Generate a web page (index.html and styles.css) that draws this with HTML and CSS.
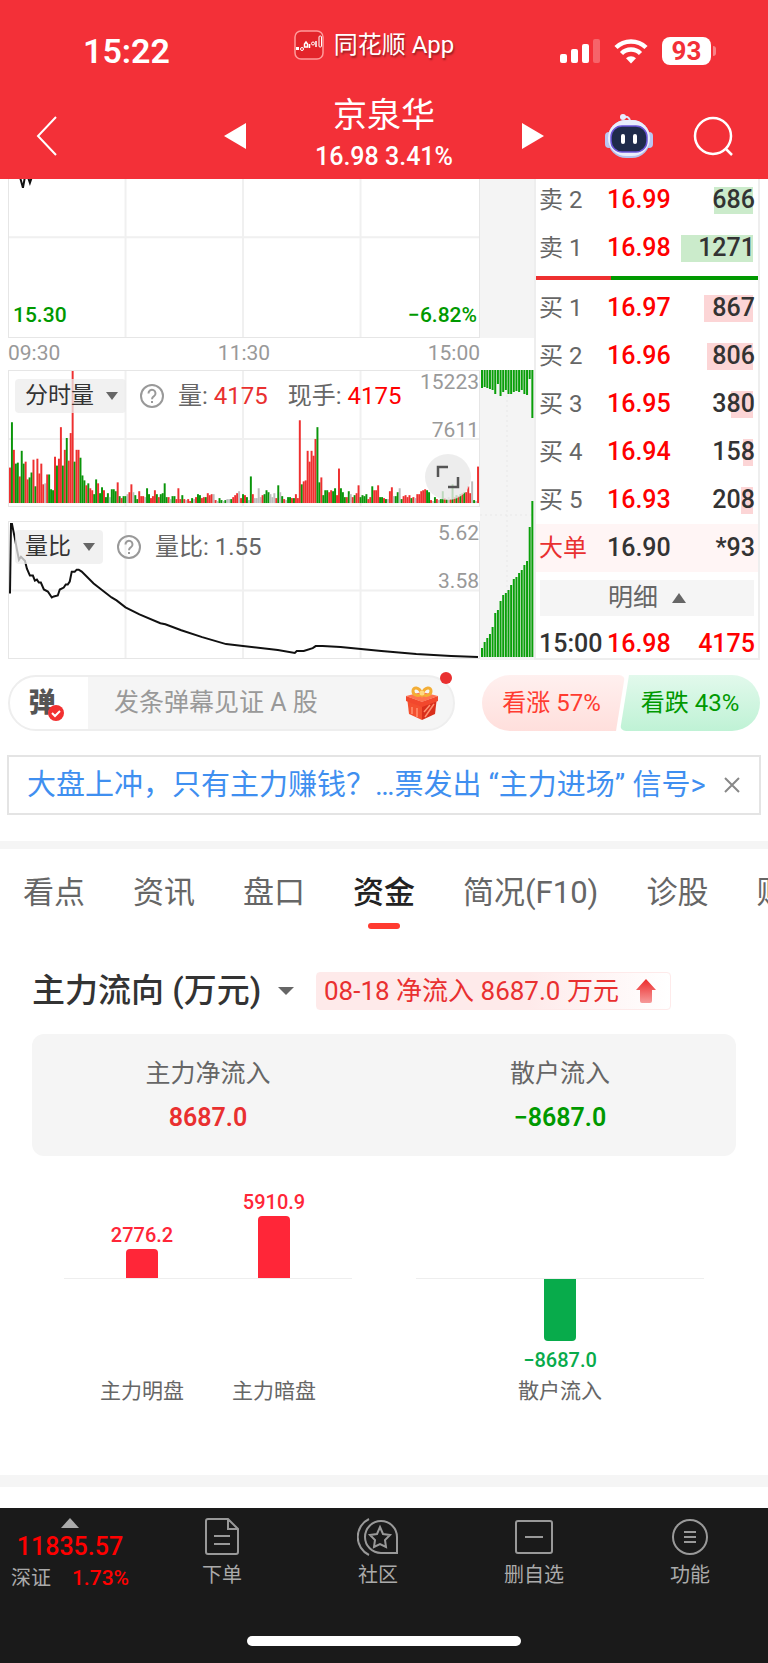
FILE: index.html
```html
<!DOCTYPE html>
<html lang="zh-CN">
<head>
    <meta charset="UTF-8">
    <meta name="viewport" content="width=device-width, initial-scale=1">
    <title>京泉华</title>
    <link rel="stylesheet" href="styles.css">
</head>
<body>
    <header class="header">
        <div class="status">
            <div class="clock">15:22</div>
            <div class="app">
                <svg class="app-logo" width="30" height="30" viewBox="0 0 30 30" fill="none" stroke="#fff">
                    <rect x="1" y="1" width="28" height="28" rx="6" fill="#e3242a" stroke="#ff9a9a" stroke-width="1.5"/>
                    <path d="M2 18.500h3" stroke-width="3"/>
                    <circle cx="8" cy="19" r="1.500"/>
                    <path d="M12 12l1.500 2v3h-3v-3zM15.500 14v4M22 11v6" stroke-width="1.500"/>
                    <circle cx="19" cy="13.500" r="1.500"/>
                    <rect x="25" y="6" width="2.500" height="11" rx="1"/>
                </svg>
                <span>同花顺 App</span>
            </div>
            <div class="signals">
                <svg width="40" height="26" viewBox="0 0 40 26" fill="#fff">
                    <rect x="0" y="16" width="7" height="9" rx="2"/>
                    <rect x="11" y="11" width="7" height="14" rx="2"/>
                    <rect x="22" y="6" width="7" height="19" rx="2"/>
                    <rect x="33" y="1" width="7" height="24" rx="2" opacity=".25"/>
                </svg>
                <svg width="34" height="26" viewBox="0 0 34 26" fill="none" stroke="#fff" stroke-width="4.500">
                    <path d="M2 9.500a21.500 21.500 0 0 1 30 0"/>
                    <path d="M7.500 15.500a13.500 13.500 0 0 1 19 0"/>
                    <path d="M17 25.500l-5-5.200a7 7 0 0 1 10 0z" fill="#fff" stroke="none"/>
                </svg>
                <div class="battery">93</div>
            </div>
        </div>
        <nav class="nav">
            <button class="icon-btn back" aria-label="返回">
                <svg width="22" height="40" viewBox="0 0 22 40" fill="none" stroke="#fff" stroke-width="2"><path d="M20 1L2 20l18 19"/></svg>
            </button>
            <div class="stock">
                <button class="icon-btn" aria-label="上一只">
                    <svg width="22" height="26" viewBox="0 0 22 26" fill="#fff"><path d="M22 0v26L0 13z"/></svg>
                </button>
                <div class="stock-info">
                    <h1>京泉华</h1>
                    <p>16.98 3.41%</p>
                </div>
                <button class="icon-btn" aria-label="下一只">
                    <svg width="22" height="26" viewBox="0 0 22 26" fill="#fff"><path d="M0 0v26l22-13z"/></svg>
                </button>
            </div>
            <div class="nav-right">
                <button class="icon-btn" aria-label="智能助手">
                    <svg width="48" height="46" viewBox="0 0 48 46">
                        <path d="M19 4q6-1 6 5" fill="none" stroke="#dfe6fb" stroke-width="2"/>
                        <circle cx="18" cy="4" r="3" fill="#e8edff"/>
                        <rect x="0" y="19" width="8" height="16" rx="4" fill="#b9c6f2"/>
                        <rect x="40" y="19" width="8" height="16" rx="4" fill="#b9c6f2"/>
                        <rect x="3" y="7" width="42" height="38" rx="18" fill="#b4c3ee"/>
                        <rect x="3" y="7" width="42" height="36" rx="18" fill="#e9eefc"/>
                        <rect x="6" y="13" width="36" height="26" rx="11" fill="#1f2b4a" stroke="#6a56d8" stroke-width="1.500"/>
                        <rect x="16" y="21" width="4" height="10" rx="2" fill="#fff"/>
                        <rect x="28" y="21" width="4" height="10" rx="2" fill="#fff"/>
                    </svg>
                </button>
                <button class="icon-btn" aria-label="搜索">
                    <svg width="40" height="40" viewBox="0 0 40 40" fill="none" stroke="#fff" stroke-width="2.500"><circle cx="20" cy="20" r="18"/><path d="M33 33l6 6"/></svg>
                </button>
            </div>
        </nav>
    </header>

    <section class="market">
        <div class="charts">
            <div class="chart chart-price">
                <svg viewBox="0 0 472 162" preserveAspectRatio="none">
                    <path class="grid" d="M0 61h472M117 0v162M235 0v162M353 0v162"/>
                    <path class="line" d="M11 0l3 11l2-11l3 0l2 6l2-6"/>
                </svg>
                <span class="tick green low-left">15.30</span>
                <span class="tick green low-right">−6.82%</span>
            </div>
            <div class="times"><span>09:30</span><span>11:30</span><span>15:00</span></div>
            <div class="chart chart-volume">
                <svg id="volume" viewBox="0 0 472 137" preserveAspectRatio="none">
                    <path class="grid" d="M0 69h472M117 0v137M235 0v137M353 0v137"/>
                </svg>
                <div class="legend">
                    <div class="picker">
                        <select aria-label="指标一"><option>分时量</option></select>
                    </div>
                    <svg class="help" viewBox="0 0 24 24"><circle cx="12" cy="12" r="11"/><path d="M8.500 9.500a3.500 3.500 0 1 1 5.500 2.700q-2 1.300-2 3M12 17v2"/></svg>
                    <span>量: <b class="soft-red">4175</b></span>
                    <span class="legend-next">现手: <b class="red">4175</b></span>
                </div>
                <div class="scale"><span>15223</span><span>7611</span></div>
                <button class="expand" aria-label="全屏">
                    <svg width="24" height="24" viewBox="0 0 24 24" fill="none" stroke="#555" stroke-width="2.500"><path d="M2 12V2h10M22 12v10H12"/></svg>
                </button>
            </div>
            <div class="chart chart-ratio">
                <svg viewBox="0 0 472 137" preserveAspectRatio="none">
                    <path class="grid" d="M0 69h472M117 0v137M235 0v137M353 0v137"/>
                    <polyline class="line" points="1,72 2,2 3,2 6,17 8,28 10,38 12,35 16,39 18,47 21,54 24,54 26,59 28,58 30,61 32,61 35,68 39,70 43,76 45,75 49,74 51,68 55,66 57,63 59,63 61,60 63,50 66,50 68,48 70,48 73,50 85,62 103,76 108,79 117,86 131,93 152,102 157,103 173,109 194,116 218,123 235,125 270,129 287,132 289,130 296,130 305,127 308,125 315,125 333,126 374,130 409,133 444,135 471,136"/>
                </svg>
                <div class="legend">
                    <div class="picker">
                        <select aria-label="指标二"><option>量比</option></select>
                    </div>
                    <svg class="help" viewBox="0 0 24 24"><circle cx="12" cy="12" r="11"/><path d="M8.500 9.500a3.500 3.500 0 1 1 5.500 2.700q-2 1.300-2 3M12 17v2"/></svg>
                    <span>量比: 1.55</span>
                </div>
                <div class="scale"><span>5.62</span><span>3.58</span></div>
            </div>
        </div>

        <div class="auction">
            <div class="auction-top"></div>
            <svg id="auction" class="auction-bottom" viewBox="0 0 54 290" preserveAspectRatio="none">
                <path d="M27 0v290M0 145h54" stroke="#e8e8e8" stroke-dasharray="2 3"/>
            </svg>
        </div>

        <div class="book">
            <table>
                <tr><th>卖 2</th><td class="red">16.99</td><td class="qty"><i class="sell" style="width: 39px"></i><span>686</span></td></tr>
                <tr><th>卖 1</th><td class="red">16.98</td><td class="qty"><i class="sell" style="width: 72px"></i><span>1271</span></td></tr>
            </table>
            <div class="balance"><i style="width: 34%"></i></div>
            <table>
                <tr><th>买 1</th><td class="red">16.97</td><td class="qty"><i class="buy" style="width: 49px"></i><span>867</span></td></tr>
                <tr><th>买 2</th><td class="red">16.96</td><td class="qty"><i class="buy" style="width: 46px"></i><span>806</span></td></tr>
                <tr><th>买 3</th><td class="red">16.95</td><td class="qty"><i class="buy" style="width: 22px"></i><span>380</span></td></tr>
                <tr><th>买 4</th><td class="red">16.94</td><td class="qty"><i class="buy" style="width: 10px"></i><span>158</span></td></tr>
                <tr><th>买 5</th><td class="red">16.93</td><td class="qty"><i class="buy" style="width: 12px"></i><span>208</span></td></tr>
                <tr class="big"><th>大单</th><td>16.90</td><td class="qty"><span>*93</span></td></tr>
            </table>
            <button class="detail">明细 <i class="tri-up"></i></button>
            <table class="trades">
                <tr><th>15:00</th><td class="red">16.98</td><td class="qty red">4175</td></tr>
            </table>
        </div>
    </section>

    <section class="talk">
        <div class="danmaku">
            <button class="danmaku-toggle" aria-label="弹幕开关">
                弹
                <svg width="16" height="16" viewBox="0 0 16 16"><circle cx="8" cy="8" r="8" fill="#f23030"/><path d="M4 8l3 3 5-5" fill="none" stroke="#fff" stroke-width="2"/></svg>
            </button>
            <input type="text" aria-label="弹幕" placeholder="发条弹幕见证 A 股">
            <button class="icon-btn gift" aria-label="礼物">
                <svg width="34" height="36" viewBox="0 0 34 36">
                    <path d="M2 12l15 5v18L4 29z" fill="#f4502f"/>
                    <path d="M32 12l-15 5v18l13-6z" fill="#d92f1c"/>
                    <path d="M1 11l16-4 16 4-16 6z" fill="#ff7350"/>
                    <path d="M1 11l16 6 16-6v5l-16 6-16-6z" fill="#f2482d"/>
                    <path d="M7 22v7M12 23v9M20 32l9-13M19 27l6-7" stroke="#ff9070" stroke-width="1.500"/>
                    <path d="M17 9c-4 3-9 1-9-3s6-5 9 3c3-8 9-7 9-3s-5 6-9 3z" fill="none" stroke="#f3ad35" stroke-width="3"/>
                    <circle cx="17" cy="8" r="2.500" fill="#ffd980"/>
                </svg>
            </button>
            <i class="dot"></i>
        </div>
        <div class="vote">
            <button class="vote-up">看涨 57%</button>
            <button class="vote-down">看跌 43%</button>
        </div>
    </section>

    <div class="notice">
        <a href="#">大盘上冲，只有主力赚钱？…票发出 “主力进场” 信号&gt;</a>
        <button class="icon-btn" aria-label="关闭">
            <svg width="16" height="16" viewBox="0 0 16 16" stroke="#888" stroke-width="2"><path d="M1 1l14 14M15 1L1 15"/></svg>
        </button>
    </div>

    <nav class="tabs">
        <a href="#">看点</a>
        <a href="#">资讯</a>
        <a href="#">盘口</a>
        <a href="#" class="active">资金</a>
        <a href="#">简况(F10)</a>
        <a href="#">诊股</a>
        <a href="#">财务</a>
    </nav>

    <main class="funds">
        <div class="funds-head">
            <div class="picker picker-title">
                <select aria-label="资金流向"><option>主力流向 (万元)</option></select>
            </div>
            <div class="tag">
                08-18 净流入 8687.0 万元
                <svg width="20" height="24" viewBox="0 0 20 24">
                    <defs><linearGradient id="fade" x1="0" y1="0" x2="0" y2="1"><stop offset="0" stop-color="#ec2a2a"/><stop offset="1" stop-color="#f69a9a"/></linearGradient></defs>
                    <path d="M10 0l10 11h-4v11q0 2-2 2H6q-2 0-2-2V11H0z" fill="url(#fade)"/>
                </svg>
            </div>
        </div>
        <div class="summary">
            <div><p>主力净流入</p><strong class="soft-red">8687.0</strong></div>
            <div><p>散户流入</p><strong class="green">−8687.0</strong></div>
        </div>
        <div class="bars">
            <div class="bar-group">
                <div class="bar-col up">
                    <div class="above"><span>2776.2</span><i style="height: 29px"></i></div>
                    <div class="below"></div>
                    <p>主力明盘</p>
                </div>
                <div class="bar-col up">
                    <div class="above"><span>5910.9</span><i style="height: 62px"></i></div>
                    <div class="below"></div>
                    <p>主力暗盘</p>
                </div>
            </div>
            <div class="bar-group">
                <div class="bar-col down">
                    <div class="above"></div>
                    <div class="below"><i style="height: 62px"></i><span>−8687.0</span></div>
                    <p>散户流入</p>
                </div>
            </div>
        </div>
    </main>

    <footer class="footer">
        <div class="toolbar">
            <button class="index">
                <i class="tri-up"></i>
                <span class="index-value">11835.57</span>
                <span class="index-row"><span>深证</span><b>1.73%</b></span>
            </button>
            <button class="tool">
                <svg width="36" height="38" viewBox="0 0 36 38"><path d="M4 1h20l10 10v23q0 2-2 2H4q-2 0-2-2V3q0-2 2-2zM24 1v10h10M10 18h16M10 26h16"/></svg>
                下单
            </button>
            <button class="tool">
                <svg width="42" height="38" viewBox="0 0 42 38"><path d="M12 1a20 20 0 0 0 0 36M40 35H24A16 16 0 1 1 40 19zM23 9l3 7 7 1-5 5 1 7-6-3-6 3 1-7-5-5 7-1z"/></svg>
                社区
            </button>
            <button class="tool">
                <svg width="40" height="38" viewBox="0 0 40 38"><rect x="2" y="3" width="36" height="32" rx="2"/><path d="M11 19h18"/></svg>
                删自选
            </button>
            <button class="tool">
                <svg width="38" height="38" viewBox="0 0 38 38"><circle cx="19" cy="19" r="17"/><path d="M13 14h12M13 19h12M13 24h12"/></svg>
                功能
            </button>
        </div>
        <div class="home-bar"></div>
    </footer>

    <script src="script.js"></script>
</body>
</html>
```

FILE: styles.css
```css
* {
    box-sizing: border-box;
}
body {
    margin: 0;
    background: #fff;
    color: #333;
    font-family: Roboto, "Noto Sans CJK SC", sans-serif;
    font-size: 24px;
    line-height: 28px;
    overflow-x: hidden;
}
h1, p {
    margin: 0;
    font-weight: 400;
}
button, input, select {
    font: inherit;
    color: inherit;
    border: none;
    background: none;
    padding: 0;
    margin: 0;
    border-radius: 0;
}
a {
    color: inherit;
    text-decoration: none;
}
svg {
    display: block;
}
i {
    display: block;
}
.red {
    color: #f00;
}
.soft-red {
    color: #e93030;
}
.green {
    color: #009900;
}

/* header */
.header {
    position: relative;
    z-index: 1;
    background: #f33038;
    color: #fff;
}
.status {
    display: grid;
    grid-template-columns: 1fr auto 1fr;
    align-items: center;
    height: 96px;
    padding-top: 6px;
}
.clock {
    padding-left: 83px;
    font-size: 34px;
    font-weight: 600;
}
.app {
    display: flex;
    align-items: center;
    gap: 10px;
    padding: 0 20px 12px 0;
    line-height: 30px;
    text-shadow: 1px 2px 2px rgba(0, 0, 0, 0.4);
}
.signals {
    display: flex;
    align-items: center;
    justify-content: flex-end;
    gap: 14px;
    padding-right: 57px;
}
.battery {
    position: relative;
    width: 49px;
    height: 28px;
    border-radius: 8px;
    background: #fff;
    color: #f33038;
    font-size: 26px;
    font-weight: 700;
    line-height: 29px;
    text-align: center;
}
.battery::after {
    content: "";
    position: absolute;
    left: 51px;
    top: 9px;
    width: 3px;
    height: 10px;
    border-radius: 0 3px 3px 0;
    background: rgba(255, 255, 255, 0.4);
}
.nav {
    display: grid;
    grid-template-columns: 1fr 320px 1fr;
    align-items: center;
    height: 83px;
}
.nav .icon-btn {
    padding-bottom: 4px;
}
.back {
    justify-self: start;
    padding-left: 36px;
}
.stock {
    display: flex;
    align-items: center;
    justify-content: space-between;
}
.stock-info {
    text-align: center;
}
.stock-info h1 {
    font-size: 34px;
    line-height: 38px;
}
.stock-info p {
    font-size: 25px;
    font-weight: 500;
    line-height: 45px;
}
.nav-right {
    display: flex;
    align-items: center;
    justify-content: flex-end;
    gap: 40px;
    padding-right: 35px;
}

/* charts */
.market {
    display: flex;
    margin-top: -3px;
    padding: 0 8px;
}
.charts {
    flex: 1;
}
.chart {
    position: relative;
    border: 1px solid #e6e6e6;
}
.chart > svg {
    width: 100%;
    height: 100%;
}
.chart-price {
    height: 162px;
}
.chart-volume {
    height: 137px;
}
.chart-ratio {
    height: 138px;
    margin-top: 14px;
}
.grid {
    stroke: #f0f0f0;
    stroke-width: 2;
    fill: none;
}
.line {
    stroke: #111;
    stroke-width: 2;
    fill: none;
}
.tick {
    position: absolute;
    bottom: 8px;
    font-size: 21px;
    font-weight: 500;
}
.low-left {
    left: 4px;
}
.low-right {
    right: 2px;
}
.times {
    display: flex;
    justify-content: space-between;
    height: 32px;
    color: #999;
    font-size: 21px;
    line-height: 31px;
}
.legend {
    position: absolute;
    top: 7px;
    left: 6px;
    display: flex;
    align-items: center;
    height: 36px;
    color: #666;
    white-space: nowrap;
}
.legend b {
    font-weight: 400;
}
.legend-next {
    margin-left: 20px;
}
.picker {
    position: relative;
    padding: 0 32px 0 10px;
    border-radius: 4px;
    background: rgba(236, 236, 236, 0.75);
    color: #333;
    font-size: 23px;
}
.picker::after {
    content: "";
    position: absolute;
    right: 8px;
    top: 50%;
    margin-top: -4px;
    border: 6px solid transparent;
    border-top: 8px solid #666;
    border-bottom: none;
}
.picker select {
    display: block;
    appearance: none;
    height: 34px;
    line-height: 34px;
}
.help {
    width: 24px;
    height: 24px;
    margin: 0 14px;
    fill: none;
    stroke: #999;
    stroke-width: 2;
}
.scale {
    position: absolute;
    top: -13px;
    right: 0;
    color: #999;
    font-size: 21px;
    line-height: 48px;
    text-align: right;
}
.scale span {
    display: block;
}
.expand {
    position: absolute;
    right: 8px;
    bottom: 6px;
    display: grid;
    place-items: center;
    width: 46px;
    height: 46px;
    border-radius: 50%;
    background: rgba(232, 232, 232, 0.8);
}
.auction {
    display: flex;
    flex-direction: column;
    justify-content: space-between;
    width: 54px;
}
.auction-top {
    height: 162px;
    background: #f4f4f4;
}
.auction-bottom {
    width: 100%;
    height: 290px;
    background: #f4f4f4;
}

/* order book */
.book {
    width: 226px;
    border: 2px solid #eee;
    border-top: none;
    font-size: 25px;
}
.book table {
    width: 100%;
    border-collapse: collapse;
    table-layout: fixed;
}
.book th, .book td {
    height: 48px;
    padding: 0;
    font-weight: 500;
    text-align: left;
    white-space: nowrap;
}
.book th {
    width: 71px;
    padding-left: 3px;
    color: #666;
    font-size: 24px;
    font-weight: 400;
}
.book .qty {
    position: relative;
    padding-right: 3px;
    text-align: right;
}
.qty i {
    position: absolute;
    top: 11px;
    right: 5px;
    height: 27px;
}
.qty span {
    position: relative;
}
.sell {
    background: #cbebcb;
}
.buy {
    background: #fcd5d6;
}
.balance {
    height: 4px;
    margin: 4px 0;
    background: #009900;
}
.balance i {
    height: 4px;
    background: #ee3030;
}
.big {
    background: #fff5f5;
}
.book .big th {
    color: #e93030;
}
.detail {
    display: flex;
    align-items: center;
    justify-content: center;
    gap: 14px;
    width: 214px;
    height: 36px;
    margin: 8px 4px 14px;
    background: #f5f5f5;
    color: #666;
}
.tri-up {
    border: 7px solid transparent;
    border-top: none;
    border-bottom: 10px solid #666;
}
.book .trades th, .book .trades td {
    height: 28px;
    font-size: 25px;
    font-weight: 500;
}
.book .trades th {
    color: #333;
}

/* danmaku and vote */
.talk {
    display: flex;
    gap: 27px;
    padding: 15px 8px 0;
}
.danmaku {
    position: relative;
    flex: 1;
    display: flex;
    align-items: center;
    min-width: 0;
    height: 56px;
    padding-right: 14px;
    border: 2px solid #eee;
    border-radius: 28px;
    background: linear-gradient(90deg, #fff 78px, #f5f5f5 78px);
}
.danmaku-toggle {
    position: relative;
    width: 78px;
    padding-right: 14px;
    color: #555;
    font-size: 27px;
    font-weight: 900;
    line-height: 40px;
}
.danmaku-toggle svg {
    position: absolute;
    left: 38px;
    bottom: 2px;
}
.danmaku input {
    flex: 1;
    min-width: 0;
    padding-left: 26px;
    font-size: 25px;
    line-height: 36px;
    outline: none;
}
.danmaku input::placeholder {
    color: #999;
    opacity: 1;
}
.dot {
    position: absolute;
    top: -5px;
    right: 1px;
    width: 12px;
    height: 12px;
    border-radius: 50%;
    background: #e93030;
}
.vote {
    flex: none;
    display: flex;
    width: 278px;
}
.vote button {
    flex: 1;
    height: 56px;
}
.vote .vote-up {
    flex: 0 0 143px;
    border-radius: 28px 6px 6px 28px;
    background: linear-gradient(#fff0ef, #ffdfdc);
    clip-path: polygon(0 0, 100% 0, 134px 100%, 0 100%);
    color: #ff3b30;
    padding-right: 4px;
}
.vote .vote-down {
    margin-left: -5px;
    border-radius: 6px 28px 28px 6px;
    background: linear-gradient(#e2f9ec, #bff2d5);
    clip-path: polygon(9px 0, 100% 0, 100% 100%, 0 100%);
    color: #009900;
}

/* notice */
.notice {
    display: flex;
    align-items: center;
    justify-content: space-between;
    height: 60px;
    margin: 24px 7px 26px;
    padding: 0 19px 0 18px;
    border: 2px solid #e4e4e4;
}
.notice a {
    color: #3f8ff0;
    font-size: 29px;
    white-space: nowrap;
}

/* tabs */
.tabs {
    display: flex;
    gap: 48px;
    height: 94px;
    padding-left: 23px;
    border-top: 8px solid #f5f5f5;
    overflow: hidden;
    color: #666;
    font-size: 31px;
    line-height: 88px;
    white-space: nowrap;
}
.tabs .active {
    position: relative;
    color: #222;
    font-weight: 500;
}
.active::after {
    content: "";
    position: absolute;
    left: 50%;
    top: 74px;
    width: 32px;
    height: 6px;
    margin-left: -16px;
    border-radius: 3px;
    background: #ff3b30;
}

/* funds */
.funds {
    padding: 36px 32px 71px;
    border-bottom: 12px solid #f5f5f5;
}
.funds-head {
    display: flex;
    align-items: center;
    gap: 22px;
}
.picker-title {
    padding: 0 32px 0 0;
    background: none;
    font-size: 33px;
    font-weight: 500;
}
.picker-title::after {
    right: 0;
    border-width: 8px 8px 0;
}
.picker-title select {
    height: 40px;
    line-height: 40px;
}
.tag {
    display: flex;
    align-items: center;
    gap: 17px;
    height: 38px;
    padding: 0 14px 0 7px;
    border: 1px solid #feeaea;
    border-radius: 4px;
    background: linear-gradient(90deg, #feeaea 60%, #fff);
    color: #e93030;
    font-size: 26px;
    white-space: nowrap;
}
.summary {
    display: grid;
    grid-template-columns: 1fr 1fr;
    height: 122px;
    margin-top: 23px;
    padding-top: 20px;
    border-radius: 12px;
    background: #f5f5f5;
    font-size: 25px;
    text-align: center;
}
.summary p {
    color: #666;
    line-height: 40px;
}
.summary strong {
    font-weight: 600;
    line-height: 48px;
}
.bars {
    display: grid;
    grid-template-columns: 1fr 1fr;
    gap: 64px;
    padding: 0 32px;
}
.bar-group {
    position: relative;
    display: flex;
    padding: 0 12px;
}
.bar-group::before {
    content: "";
    position: absolute;
    left: 0;
    right: 0;
    top: 122px;
    border-top: 1px solid #eee;
}
.bar-col {
    flex: 1;
    font-size: 21px;
    text-align: center;
}
.above, .below {
    display: flex;
    flex-direction: column;
    align-items: center;
    font-size: 20px;
    font-weight: 500;
}
.above {
    justify-content: flex-end;
    height: 122px;
}
.below {
    height: 100px;
    padding-top: 1px;
}
.bar-col i {
    width: 32px;
}
.up {
    color: #ff2638;
}
.up i {
    border-radius: 4px 4px 0 0;
    background: #ff2638;
}
.down {
    color: #08ab4b;
}
.down i {
    margin-bottom: 5px;
    border-radius: 0 0 4px 4px;
    background: #08ab4b;
}
.bar-col p {
    color: #666;
    line-height: 26px;
}

/* footer */
.footer {
    height: 155px;
    margin-top: 21px;
    background: #1a1a1a;
    color: #aaa;
    font-size: 20px;
}
.toolbar {
    display: flex;
    height: 128px;
}
.index {
    display: flex;
    flex-direction: column;
    align-items: center;
    width: 144px;
    padding: 10px 4px 0 0;
}
.index .tri-up {
    border-width: 0 9px 10px;
    border-bottom-color: #aaa;
}
.index-value {
    color: #f00;
    font-size: 25px;
    font-weight: 500;
    line-height: 38px;
}
.index-row {
    display: flex;
    gap: 21px;
    line-height: 24px;
}
.index-row b {
    color: #f00;
    font-size: 21px;
    font-weight: 500;
}
.tool {
    flex: 1;
    display: flex;
    flex-direction: column;
    align-items: center;
    gap: 4px;
    padding-top: 10px;
    line-height: 30px;
}
.tool svg {
    fill: none;
    stroke: #999;
    stroke-width: 2;
}
.home-bar {
    width: 274px;
    height: 10px;
    margin: 0 auto;
    border-radius: 5px;
    background: #fff;
}
```

FILE: script.js
```javascript
const NS = 'http://www.w3.org/2000/svg';
const COLORS = { r: '#ee3030', g: '#0a950a', x: '#bdbdbd' };

// one entry per minute: colour + bar height
const minutes = `r36 g82 r54 g40 g41 r27 g53 g40 r42 r24 g26 g31 r44 g17 r45 r30 r40 r19 x20 r29
g29 g14 g13 r47 g38 r45 r77 g38 r54 g66 r43 r71 r134 g42 r54 r54 g46 g28 g23 r18
g20 r15 r13 g9 g24 r20 g10 g16 r13 g6 g10 x6 g14 g14 g12 r21 g7 r5 g7 g7
x9 r11 r19 x11 g8 g4 r12 r7 r7 x6 g15 g9 r5 r7 r13 g9 r6 g9 g10 g20
g6 r6 x4 g7 g7 r4 r15 r4 g8 r4 x3 r4 r2 g5 x4 r6 g9 g8 r5 r6
g6 r10 r8 r9 x9 r3 x2 g5 g3 x2 g3 x4 x4 g4 r6 r8 r10 x12 r5 g9
r8 g6 x3 g27 r9 x5 x5 x15 x6 r8 g9 g13 g11 x9 x6 x10 r5 g18 x11 g7
r4 x3 g6 g6 r5 g5 r9 r5 r84 g19 r22 r23 r53 r42 r53 r48 r65 g77 g21 r26
g8 g13 g13 r11 r13 g12 g15 r8 r35 g15 g11 g6 r6 g12 x9 r6 g8 r10 r18 g6
g8 g7 g9 r4 r6 g17 r13 r13 r18 g6 g6 r5 g4 x4 r12 r16 x7 g7 g11 x15
g4 r7 r8 r6 r8 g5 r6 x5 r9 r9 r12 r13 r14 g13 g11 r3 x2 g6 r4 x3
g4 g12 r5 g4 x6 r4 g19 r6 g8 r7 g9 r10 g11 r11 r17 r10 x22 g3 x2 r37`.split(/\s+/);

const opening = [18, 17, 18, 19, 20, 24, 14, 26, 22, 20, 24, 24, 22, 21, 22, 20, 24, 25, 9, 48];
const closing = [9, 15, 19, 23, 30, 44, 47, 56, 62, 64, 67, 72, 78, 80, 84, 87, 92, 96, 130, 156];

function addBar(svg, x, y, width, height, color) {
    const rect = document.createElementNS(NS, 'rect');
    rect.setAttribute('x', x);
    rect.setAttribute('y', y);
    rect.setAttribute('width', width);
    rect.setAttribute('height', height);
    rect.setAttribute('fill', color);
    svg.appendChild(rect);
}

const volume = document.getElementById('volume');
const step = 472 / minutes.length;
minutes.forEach((item, i) => {
    const height = Number(item.slice(1));
    addBar(volume, i * step, 134 - height, step, height, COLORS[item[0]]);
});

const auction = document.getElementById('auction');
opening.forEach((height, i) => addBar(auction, 1 + i * 2.65, 0, 2, height, '#0a9f0a'));
closing.forEach((height, i) => addBar(auction, 1 + i * 2.65, 287 - height, 2, height, '#0a9f0a'));
```
